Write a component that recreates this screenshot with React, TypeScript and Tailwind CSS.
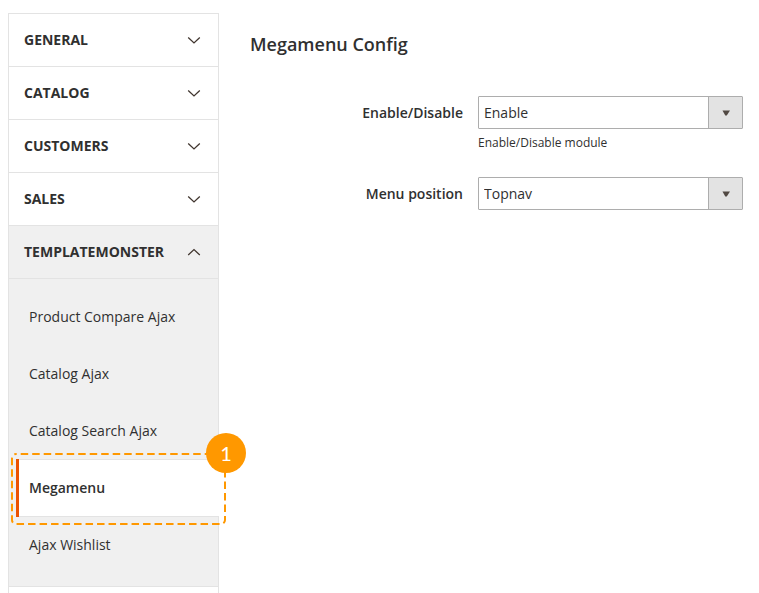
import React from "react";

const collapsed = ["General", "Catalog", "Customers", "Sales"];
const pages = ["Product Compare Ajax", "Catalog Ajax", "Catalog Search Ajax", "Megamenu", "Ajax Wishlist"];

function Chevron({ up = false }: { up?: boolean }) {
  return (
    <svg width="14" height="8" viewBox="0 0 14 8" fill="none" stroke="#41362f" strokeWidth="1.3" aria-hidden="true">
      <path d={up ? "M1.2 7 7 1.6 12.800 7" : "M1.2 1.500 7 6.900l5.8-5.4"} />
    </svg>
  );
}

function SectionButton({ title, open = false }: { title: string; open?: boolean }) {
  return (
    <button
      type="button"
      aria-expanded={open}
      className={`flex h-[53px] w-full items-center justify-between border-b border-[#e3e3e3] pr-[17px] pl-[15px] font-bold uppercase ${open ? "bg-[#f0f0f0]" : "bg-white"}`}
    >
      {title}
      <Chevron up={open} />
    </button>
  );
}

function StepMarker() {
  return (
    <div className="pointer-events-none absolute -top-1.5 -right-[7px] -bottom-2 -left-[5px]">
      <svg className="absolute inset-0 h-full w-full" viewBox="0 0 215 72" fill="none" aria-hidden="true">
        <rect
          x="1"
          y="1"
          width="213"
          height="70"
          rx="4"
          stroke="#ff9800"
          strokeWidth="2"
          strokeDasharray="7.5 4"
          strokeDashoffset="6.8"
        />
      </svg>
      <span className="absolute -top-5 -right-5 flex size-10 items-center justify-center rounded-full bg-[#ff9800] font-[Lato,sans-serif] text-[20px] text-white">
        1
      </span>
    </div>
  );
}

function PageLink({ name }: { name: string }) {
  const active = name === "Megamenu";
  return (
    <li className={active ? "relative z-10 -mr-px -mb-px" : ""}>
      <a
        href="#"
        aria-current={active ? "page" : undefined}
        className={
          active
            ? "flex h-[58px] items-center bg-white font-semibold"
            : "flex h-[57px] items-center pl-[13px]"
        }
      >
        {active && <span className="h-full w-[3px] bg-[#eb5202]" />}
        {active ? (
          <span className="flex h-full flex-1 items-center border-y border-[#e3e3e3] pl-2.5">{name}</span>
        ) : (
          name
        )}
      </a>
      {active && <StepMarker />}
    </li>
  );
}

function SelectField({ id, label, value, note }: { id: string; label: string; value: string; note?: string }) {
  return (
    <div className="flex gap-[15px]">
      <label htmlFor={id} className="flex h-[33px] flex-1 items-center justify-end font-semibold">
        {label}
      </label>
      <div className="w-[265px]">
        <div className="relative">
          <select
            id={id}
            defaultValue={value}
            className="block h-[33px] w-full appearance-none rounded-[1px] border border-[#adadad] bg-white pr-10 pl-[5px]"
          >
            <option>{value}</option>
          </select>
          <span className="pointer-events-none absolute inset-y-px right-px flex w-[34px] items-center justify-center border-l border-[#adadad] bg-[#e3e3e3]">
            <svg width="8" height="6" viewBox="0 0 8 6" fill="#514943" aria-hidden="true">
              <path d="M.5.5h7.500L4.750 5.500h-1.500z" />
            </svg>
          </span>
        </div>
        {note && <p className="mt-1 text-[12px] leading-5">{note}</p>}
      </div>
    </div>
  );
}

export default function App() {
  return (
    <div className="flex h-screen gap-[31px] overflow-hidden bg-white pt-[13px] pr-4 pl-2 font-['Open_Sans',sans-serif] text-[14px] leading-5 text-[#303030]">
      <nav className="w-[211px] shrink-0">
        <div className="border-x border-t border-[#e3e3e3]">
          {collapsed.map((title) => (
            <SectionButton key={title} title={title} />
          ))}
          <SectionButton title="Templatemonster" open />
          <ul className="border-b border-[#e3e3e3] bg-[#f0f0f0] pt-[9px] pb-[13px] pl-[7px]">
            {pages.map((name) => (
              <PageLink key={name} name={name} />
            ))}
          </ul>
          <div className="h-[53px] bg-white" />
        </div>
      </nav>
      <main className="flex-1 pt-[19px]">
        <h1 className="text-[18px] leading-6 font-semibold">Megamenu Config</h1>
        <form className="mt-10 flex flex-col gap-6">
          <SelectField id="enable" label="Enable/Disable" value="Enable" note="Enable/Disable module" />
          <SelectField id="position" label="Menu position" value="Topnav" />
        </form>
      </main>
    </div>
  );
}
